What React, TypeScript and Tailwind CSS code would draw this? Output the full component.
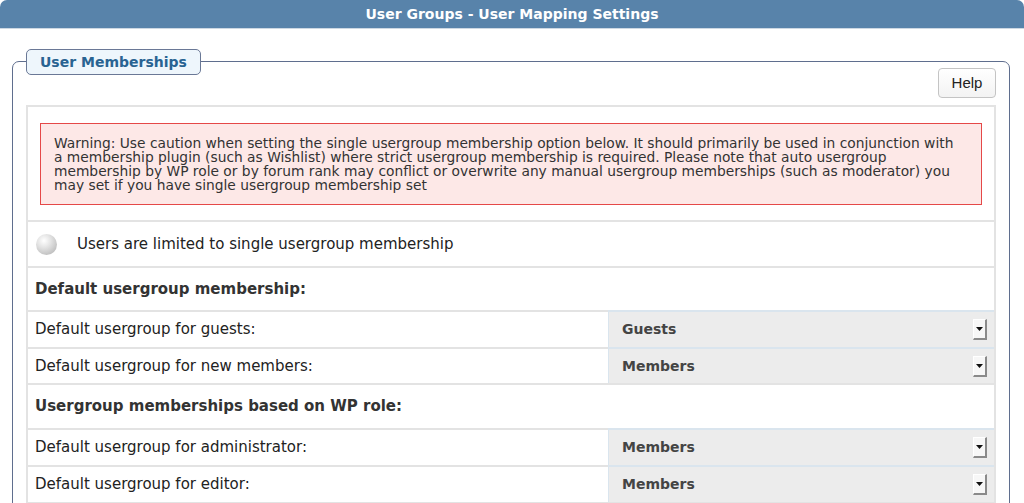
const warningLines = [
  "Warning: Use caution when setting the single usergroup membership option below. It should primarily be used in conjunction with",
  "a membership plugin (such as Wishlist) where strict usergroup membership is required. Please note that auto usergroup",
  "membership by WP role or by forum rank may conflict or overwrite any manual usergroup memberships (such as moderator) you",
  "may set if you have single usergroup membership set",
];

function SelectCell({ value }: { value: string }) {
  return (
    <div className="w-[386px] h-full flex items-center justify-between bg-[#ececec] border-t-2 border-l border-[#dae5ee] pl-[13px] pr-[7px]">
      <span className="font-bold text-[14px] text-[#444]">{value}</span>
      <span className="w-[14px] h-[21px] flex items-center justify-center bg-[#f7f7f7] border-r-2 border-b-2 border-[#8a8a8a] border-t border-l border-t-white border-l-white">
        <svg width="7" height="4" viewBox="0 0 7 4">
          <path d="M0 0h7L3.5 4z" fill="#111" />
        </svg>
      </span>
    </div>
  );
}

function SelectRow({ label, value, h }: { label: string; value: string; h: string }) {
  return (
    <div className={`flex ${h}`}>
      <div className="flex-1 h-full flex items-center border-t-2 border-[#e3e3e3] pl-[7px] text-[15px] text-[#222]">{label}</div>
      <SelectCell value={value} />
    </div>
  );
}

export default function App() {
  return (
    <div className="w-[1024px] h-[503px] overflow-hidden bg-white font-['DejaVu_Sans',Verdana,sans-serif] text-[#333]">
      <div className="h-[29px] bg-[#5883aa] rounded-t-[7px] border-b border-[#cdd8e3] flex items-center justify-center text-white font-bold text-[14px]">
        User Groups - User Mapping Settings
      </div>

      <div className="relative ml-[12px] mr-[14px] mt-[32px] border border-[#5f6e8e] rounded-[7px] px-[13px] pt-[6px] pb-4">
        <div className="absolute left-[13px] -top-[13px] h-[26px] px-[13px] flex items-center bg-[#eef6fc] border border-[#6a7896] rounded-[5px] font-bold text-[14px] text-[#296392]">
          User Memberships
        </div>

        <div className="flex justify-end">
          <button className="w-[58px] h-[30px] rounded-[4px] border border-[#c4c4c4] bg-gradient-to-b from-white to-[#f3f3f3] font-['Liberation_Sans',Arial,sans-serif] text-[15px] text-[#222]">
            Help
          </button>
        </div>

        <div className="mt-[7px] border-2 border-[#e3e3e3]">
          <div className="px-[12px] pt-[16px] pb-[15px]">
            <div className="border border-[#e54848] bg-[#fde8e7] px-[13px] py-[12px] text-[13.8px] leading-[14px] text-[#333] whitespace-nowrap">
              {warningLines.map((l) => (
                <div key={l}>{l}</div>
              ))}
            </div>
          </div>

          <div className="h-[46px] border-t-2 border-[#e3e3e3] flex items-center pl-[8px]">
            <span className="w-[21px] h-[21px] rounded-full bg-[radial-gradient(circle_at_38%_32%,#ffffff_0%,#e4e4e4_35%,#bdbdbd_80%,#a9a9a9_100%)]" />
            <span className="ml-[20px] text-[15px] text-[#222]">Users are limited to single usergroup membership</span>
          </div>

          <div className="h-[44px] border-t-2 border-[#e3e3e3] flex items-center pl-[7px] font-bold text-[15px]">
            Default usergroup membership:
          </div>
          <SelectRow label="Default usergroup for guests:" value="Guests" h="h-[37px]" />
          <SelectRow label="Default usergroup for new members:" value="Members" h="h-[36px]" />

          <div className="h-[45px] border-t-2 border-[#e3e3e3] flex items-center pl-[7px] font-bold text-[15px]">
            Usergroup memberships based on WP role:
          </div>
          <SelectRow label="Default usergroup for administrator:" value="Members" h="h-[37px]" />
          <SelectRow label="Default usergroup for editor:" value="Members" h="h-[37px]" />
          <div className="h-[8px] border-t-2 border-[#e3e3e3]" />
        </div>
      </div>
    </div>
  );
}
